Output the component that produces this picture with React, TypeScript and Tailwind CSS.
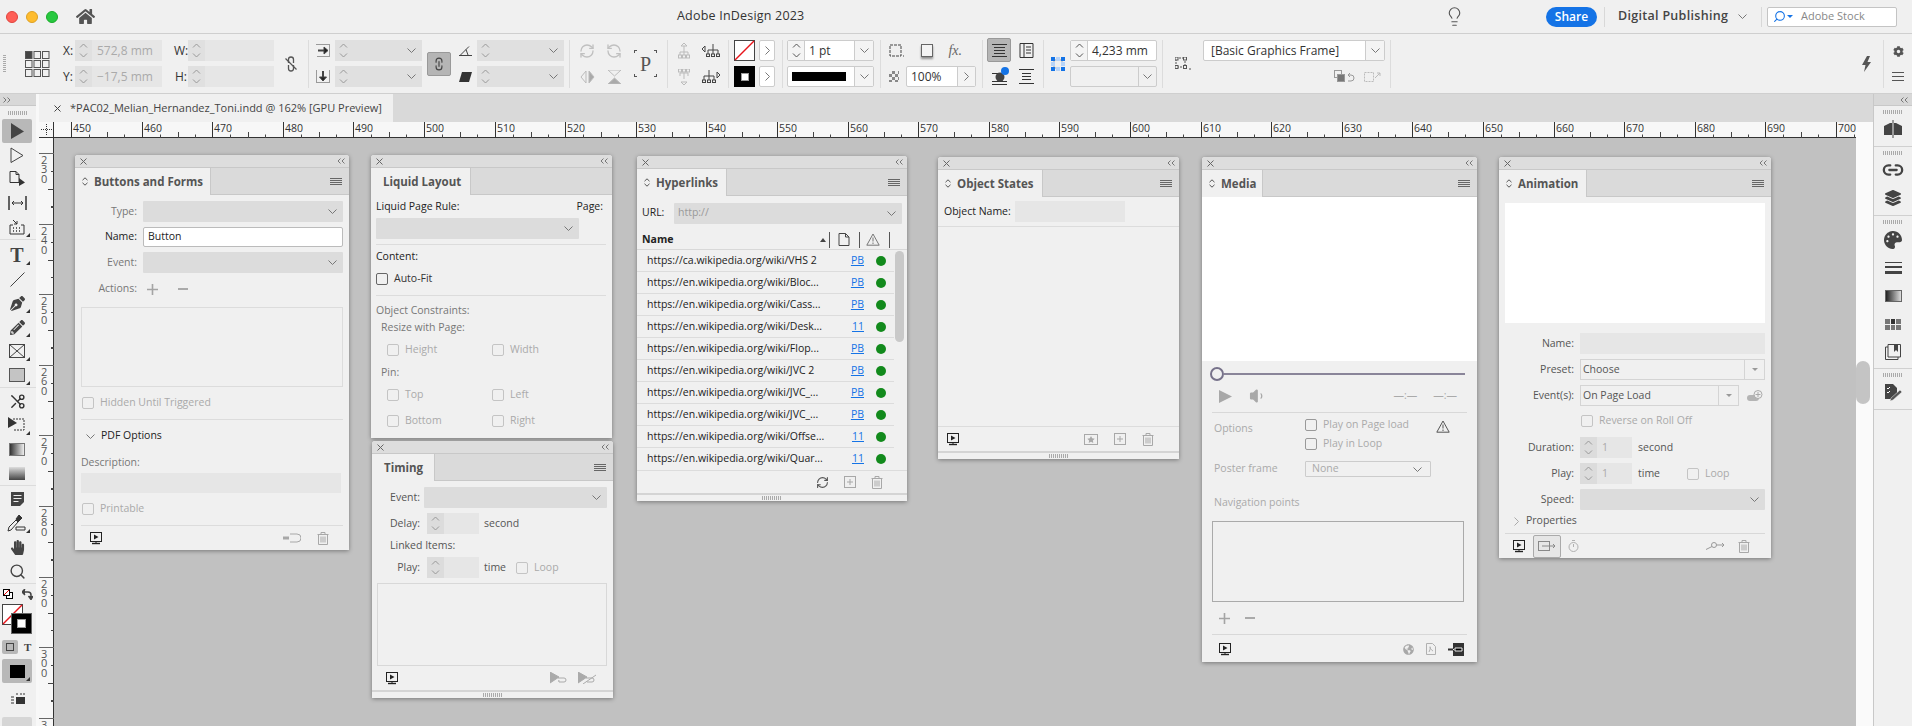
import type { ReactNode } from 'react'
import clsx from 'clsx'
import { FaHome, FaPenNib, FaPencilAlt, FaHandPaper, FaPalette, FaLayerGroup, FaCog, FaGlobeAmericas } from 'react-icons/fa'
import { Search, Scissors, RefreshCw, Lightbulb, Link2, Volume1 } from 'lucide-react'

const HYPERLINKS = [
  ['https://ca.wikipedia.org/wiki/VHS 2', 'PB'],
  ['https://en.wikipedia.org/wiki/Bloc...', 'PB'],
  ['https://en.wikipedia.org/wiki/Cass...', 'PB'],
  ['https://en.wikipedia.org/wiki/Desk...', '11'],
  ['https://en.wikipedia.org/wiki/Flop...', 'PB'],
  ['https://en.wikipedia.org/wiki/JVC 2', 'PB'],
  ['https://en.wikipedia.org/wiki/JVC_...', 'PB'],
  ['https://en.wikipedia.org/wiki/JVC_...', 'PB'],
  ['https://en.wikipedia.org/wiki/Offse...', '11'],
  ['https://en.wikipedia.org/wiki/Quar...', '11'],
]

const RULER_X = Array.from({ length: 26 }, (_, i) => 450 + i * 10)
const RULER_Y = [230, 240, 250, 260, 270, 280, 290, 300, 310]

function Chevron({ className }: { className?: string }) {
  return (
    <svg className={clsx('h-[5px] w-[9px]', className)} viewBox="0 0 9 5" fill="none" stroke="#777" strokeWidth={1}>
      <path d="M0.5 0.5 4.5 4.5 8.5 0.5" />
    </svg>
  )
}

function SpinArrows({ light }: { light?: boolean }) {
  const color = light ? '#999' : '#555'
  return (
    <svg className="h-[15px] w-[9px]" viewBox="0 0 9 15" fill="none" stroke={color} strokeWidth={1}>
      <path d="M1 4.5 4.5 1 8 4.5M1 10.5 4.5 14 8 10.5" />
    </svg>
  )
}

function Collapse({ flip }: { flip?: boolean }) {
  return (
    <svg className={clsx('shrink-0', flip && '-scale-x-100')} width="8" height="6" viewBox="0 0 8 6" fill="none" stroke="#777">
      <path d="M3.500.5 1 3l2.500 2.500M7.500.5 5 3l2.500 2.500" />
    </svg>
  )
}

function Grip() {
  return <div className="h-[4px] w-[20px] bg-[repeating-linear-gradient(90deg,#aaa_0_1px,transparent_1px_2px)]" />
}

function PlusIcon() {
  return (
    <svg width="11" height="11" viewBox="0 0 11 11" stroke="#a4a4a4" strokeWidth="1.600">
      <path d="M5.500 0v11M0 5.500h11" />
    </svg>
  )
}

function SelectBox({ className, children }: { className?: string; children?: ReactNode }) {
  return (
    <div className={clsx('flex h-[21px] items-center justify-between rounded-[1px] bg-[#dcdcdc] pr-[6px] pl-[4px] text-[#999]', className)}>
      <span>{children}</span>
      <Chevron />
    </div>
  )
}

function SpinBox({ value, className }: { value?: string; className?: string }) {
  return (
    <div className={clsx('flex h-[21px] bg-[#e6e6e6] text-[#aaa]', className)}>
      <div className="flex w-[17px] shrink-0 items-center justify-center bg-[#dcdcdc]">
        <SpinArrows light />
      </div>
      <span className="flex items-center pl-[5px]">{value}</span>
    </div>
  )
}

function Check({ label, dark, className }: { label?: string; dark?: boolean; className?: string }) {
  return (
    <div className={clsx('flex h-[16px] items-center gap-[6px]', dark ? 'text-[#333]' : 'text-[#aaa]', className)}>
      <span className={clsx('h-[12px] w-[12px] shrink-0 rounded-[2px] border bg-[#f0f0f0]', dark ? 'border-[#666]' : 'border-[#c4c4c4]')} />
      {label}
    </div>
  )
}

function PreviewIcon() {
  return (
    <svg width="14" height="13" viewBox="0 0 14 13" fill="none">
      <rect x="1.5" y="0.5" width="11" height="9" fill="none" stroke="#222" />
      <path d="M5 2.5 9.5 5 5 7.5Z" fill="#222" />
      <path d="M3 11.5h8" stroke="#222" strokeWidth="1.4" />
      <path d="M6 10h2" stroke="#222" />
    </svg>
  )
}

function TrashIcon() {
  return (
    <svg width="12" height="13" viewBox="0 0 12 13" fill="none" stroke="#a8a8a8">
      <path d="M0.5 2.5h11M4 2.5v-2h4v2M1.5 2.5v10h9v-10M4 4.5v6M6 4.5v6M8 4.5v6" />
    </svg>
  )
}

function PlusBoxIcon() {
  return (
    <svg width="12" height="12" viewBox="0 0 12 12" fill="none" stroke="#a8a8a8">
      <rect x="0.5" y="0.5" width="11" height="11" />
      <path d="M6 3v6M3 6h6" />
    </svg>
  )
}

function WarnIcon({ color }: { color: string }) {
  return (
    <svg width="14" height="13" viewBox="0 0 14 13" fill="none" stroke={color}>
      <path d="M7 1 13.2 12.2H.8Z" />
      <path d="M7 4.5v4M7 9.5v1.5" />
    </svg>
  )
}

function Panel({
  className,
  tabClass,
  title,
  arrows,
  menu = true,
  grip,
  children,
}: {
  className: string
  tabClass: string
  title: string
  arrows?: boolean
  menu?: boolean
  grip?: boolean
  children: ReactNode
}) {
  return (
    <div className={clsx('absolute flex flex-col rounded-t-[3px] bg-[#f0f0f0] text-[10.5px] text-[#555] shadow-[0_1px_4px_rgba(0,0,0,0.38)]', className)}>
      <div className="flex h-[13px] shrink-0 items-center justify-between rounded-t-[3px] border-b border-[#c8c8c8] bg-[#dddddd] pr-[4px] pl-[5px]">
        <svg width="7" height="7" viewBox="0 0 7 7" stroke="#666" strokeWidth="1">
          <path d="M.5.5l6 6M6.5.5l-6 6" />
        </svg>
        <Collapse />
      </div>
      <div className="flex h-[27px] shrink-0 items-stretch border-b border-[#c8c8c8] bg-[#dadada]">
        <div className={clsx('-mb-px flex items-center gap-[6px] border-r border-[#c8c8c8] bg-[#f0f0f0] text-[11.500px] font-bold text-[#555]', arrows ? 'pl-[7px]' : 'pl-[12px]', tabClass)}>
          {arrows && (
            <svg width="6" height="9" viewBox="0 0 6 9" fill="none" stroke="#555">
              <path d="M.5 3.2 3 .8l2.500 2.400M.5 5.800 3 8.200l2.500-2.400" />
            </svg>
          )}
          {title}
        </div>
        <div className="flex-1" />
        {menu && (
          <div className="flex w-[19px] flex-col justify-center gap-[1px] pr-[7px]">
            <i className="h-px bg-[#666]" />
            <i className="h-px bg-[#666]" />
            <i className="h-px bg-[#666]" />
            <i className="h-px bg-[#666]" />
          </div>
        )}
      </div>
      {children}
      {grip && (
        <div className="flex h-[8px] shrink-0 items-center justify-center border-t-[2px] border-[#d4d4d4]">
          <Grip />
        </div>
      )}
    </div>
  )
}

function ButtonsAndForms() {
  return (
    <Panel className="left-[21px] top-[17px] h-[395px] w-[274px]" tabClass="w-[136px]" title="Buttons and Forms" arrows>
      <div className="flex flex-1 flex-col px-[6px] pt-[6px]">
        <div className="flex items-center gap-[6px]">
          <span className="w-[56px] text-right text-[#777]">Type:</span>
          <SelectBox className="w-[200px]" />
        </div>
        <div className="mt-[5px] flex items-center gap-[6px]">
          <span className="w-[56px] text-right text-[#222]">Name:</span>
          <div className="flex h-[20px] w-[200px] items-center rounded-[2px] border border-[#bbb] bg-white pl-[4px] text-[#222]">Button</div>
        </div>
        <div className="mt-[5px] flex items-center gap-[6px]">
          <span className="w-[56px] text-right text-[#777]">Event:</span>
          <SelectBox className="w-[200px]" />
        </div>
        <div className="mt-[6px] flex h-[20px] items-center gap-[6px]">
          <span className="w-[56px] text-right text-[#777]">Actions:</span>
          <span className="ml-[4px] flex"><PlusIcon /></span>
          <span className="ml-[14px] h-[2px] w-[10px] bg-[#aaa]" />
        </div>
        <div className="mt-[8px] h-[80px] w-[262px] border border-[#dcdcdc]" />
        <Check label="Hidden Until Triggered" className="mt-[8px] ml-px" />
        <div className="mt-[8px] border-t border-[#dcdcdc]" />
        <div className="mt-[8px] flex h-[16px] items-center gap-[6px] pl-[5px] text-[#222]">
          <Chevron />
          PDF Options
        </div>
        <div className="mt-[11px] text-[#777]">Description:</div>
        <div className="mt-[2px] h-[20px] w-[260px] bg-[#e6e6e6]" />
        <Check label="Printable" className="mt-[8px] ml-px" />
        <div className="mt-auto flex h-[25px] items-center justify-between border-t border-[#dcdcdc] pr-[14px] pl-[8px]">
          <PreviewIcon />
          <div className="flex items-center gap-[16px]">
            <svg width="18" height="10" viewBox="0 0 18 10" fill="none" stroke="#a8a8a8">
              <path d="M7 1h7a4 4 0 0 1 0 8H7" />
              <path d="M0 5h6" strokeWidth="3" />
            </svg>
            <TrashIcon />
          </div>
        </div>
      </div>
    </Panel>
  )
}

function LiquidLayout() {
  return (
    <Panel className="left-[317px] top-[17px] h-[283px] w-[241px]" tabClass="w-[100px]" title="Liquid Layout" menu={false}>
      <div className="flex flex-1 flex-col px-[5px] pt-[4px] text-[#222]">
        <div className="flex h-[16px] w-[227px] items-center justify-between">
          <span>Liquid Page Rule:</span>
          <span>Page:</span>
        </div>
        <SelectBox className="mt-[3px] w-[203px]" />
        <div className="mt-[5px] w-[230px] border-t border-[#dcdcdc]" />
        <div className="mt-[4px] flex h-[16px] items-center">Content:</div>
        <Check label="Auto-Fit" dark className="mt-[6px]" />
        <div className="mt-[8px] w-[230px] border-t border-[#dcdcdc]" />
        <div className="mt-[7px] flex h-[16px] items-center text-[#777]">Object Constraints:</div>
        <div className="mt-[1px] flex h-[16px] items-center pl-[5px] text-[#777]">Resize with Page:</div>
        <div className="mt-[6px] flex pl-[11px]">
          <Check label="Height" className="w-[105px]" />
          <Check label="Width" />
        </div>
        <div className="mt-[7px] flex h-[16px] items-center pl-[5px] text-[#777]">Pin:</div>
        <div className="mt-[6px] flex pl-[11px]">
          <Check label="Top" className="w-[105px]" />
          <Check label="Left" />
        </div>
        <div className="mt-[10px] flex pl-[11px]">
          <Check label="Bottom" className="w-[105px]" />
          <Check label="Right" />
        </div>
      </div>
    </Panel>
  )
}

function Timing() {
  return (
    <Panel className="left-[318px] top-[303px] h-[257px] w-[241px]" tabClass="w-[63px]" title="Timing" grip>
      <div className="flex flex-1 flex-col px-[5px] pt-[6px]">
        <div className="flex items-center gap-[4px]">
          <span className="w-[43px] text-right">Event:</span>
          <SelectBox className="w-[183px]" />
        </div>
        <div className="mt-[5px] flex items-center">
          <span className="w-[43px] text-right">Delay:</span>
          <SpinBox className="ml-[7px] w-[52px]" />
          <span className="ml-[5px]">second</span>
        </div>
        <div className="mt-[4px] flex h-[16px] items-center pl-[13px]">Linked Items:</div>
        <div className="mt-[3px] flex items-center">
          <span className="w-[43px] text-right">Play:</span>
          <SpinBox className="ml-[7px] w-[52px]" />
          <span className="ml-[5px]">time</span>
          <Check label="Loop" className="ml-[10px]" />
        </div>
        <div className="mt-[5px] h-[83px] w-[230px] border border-[#d8d8d8]" />
        <div className="flex flex-1 items-center justify-between pr-[11px] pl-[8px]">
          <PreviewIcon />
          <div className="flex gap-[9px]">
            <svg width="19" height="12" viewBox="0 0 19 12" fill="none" stroke="#aaa">
              <path d="M0 0 9 5 0 11Z" fill="#aaa" />
              <path d="M8 6h6a2 2 0 0 1 0 4H9a2 2 0 0 1 0-2" />
            </svg>
            <svg width="19" height="12" viewBox="0 0 19 12" fill="none" stroke="#aaa">
              <path d="M0 0 9 5 0 11Z" fill="#aaa" />
              <path d="M8 6h6a2 2 0 0 1 0 4H9M5 12 18 3" />
            </svg>
          </div>
        </div>
      </div>
    </Panel>
  )
}

function Hyperlinks() {
  return (
    <Panel className="left-[583px] top-[18px] h-[345px] w-[270px]" tabClass="w-[90px]" title="Hyperlinks" arrows grip>
      <div className="flex h-[34px] shrink-0 items-center gap-[10px] px-[5px]">
        <span className="w-[22px] text-[#222]">URL:</span>
        <SelectBox className="w-[228px] text-[#999]">http://</SelectBox>
      </div>
      <div className="flex h-[20px] shrink-0 items-center border-b border-[#d8d8d8] pl-[5px] text-[#222]">
        <span className="w-[178px] font-bold">Name</span>
        <span className="h-0 w-0 border-x-[3px] border-b-[4px] border-x-transparent border-b-[#444]" />
        <span className="ml-[3px] h-[16px] w-px bg-[#555]" />
        <svg className="ml-[8px]" width="12" height="13" viewBox="0 0 12 13" fill="none" stroke="#444">
          <path d="M1 .5h6.500L11 4v8.500H1ZM7.500 .5V4H11" />
        </svg>
        <span className="ml-[9px] h-[16px] w-px bg-[#555]" />
        <span className="ml-[6px]"><WarnIcon color="#777" /></span>
        <span className="ml-[9px] h-[16px] w-px bg-[#555]" />
      </div>
      <div className="flex h-[220px] shrink-0">
        <div className="w-[257px]">
          {HYPERLINKS.map(([url, page], i) => (
            <div key={i} className="flex h-[22px] items-center border-b border-[#dcdcdc] pl-[10px] text-[#222] last:border-b-0">
              <span className="w-[180px]">{url}</span>
              <span className="w-[37px] text-right text-[#1473e6] underline">{page}</span>
              <span className="ml-[12px] h-[10px] w-[10px] rounded-full bg-[#128a1c]" />
            </div>
          ))}
        </div>
        <div className="ml-[1px] pt-[1px]">
          <div className="h-[91px] w-[9px] rounded-full bg-[#c9c9c9]" />
        </div>
      </div>
      <div className="flex flex-1 items-center justify-end gap-[15px] border-t border-[#dcdcdc] pr-[24px]">
        <RefreshCw size={13} color="#555" strokeWidth={2} />
        <PlusBoxIcon />
        <TrashIcon />
      </div>
    </Panel>
  )
}

function ObjectStates() {
  return (
    <Panel className="left-[884px] top-[19px] h-[302px] w-[241px]" tabClass="w-[105px]" title="Object States" arrows grip>
      <div className="flex h-[30px] shrink-0 items-center gap-[4px] border-b border-[#dcdcdc] pl-[6px] text-[#222]">
        <span className="w-[67px]">Object Name:</span>
        <span className="h-[21px] w-[110px] bg-[#e6e6e6]" />
      </div>
      <div className="flex-1" />
      <div className="flex h-[25px] shrink-0 items-center justify-between border-t border-[#dcdcdc] pr-[25px] pl-[8px]">
        <PreviewIcon />
        <div className="flex items-center gap-[16px]">
          <svg width="14" height="11" viewBox="0 0 14 11" fill="none" stroke="#a8a8a8">
            <rect x="0.500" y="0.500" width="13" height="10" />
            <path d="M7 2l1.200 2.300 2.500.4-1.800 1.800.4 2.500L7 7.800 4.700 9l.4-2.500-1.800-1.800 2.500-.4Z" fill="#a8a8a8" stroke="none" />
          </svg>
          <PlusBoxIcon />
          <TrashIcon />
        </div>
      </div>
    </Panel>
  )
}

function Media() {
  return (
    <Panel className="left-[1148px] top-[19px] h-[505px] w-[275px]" tabClass="w-[61px]" title="Media" arrows>
      <div className="h-[164px] shrink-0 bg-white" />
      <div className="flex h-[26px] shrink-0 items-center pl-[8px]">
        <span className="h-[14px] w-[14px] shrink-0 rounded-full border-[2px] border-[#77728a] bg-[#f0f0f0]" />
        <span className="h-[2px] w-[241px] bg-[#8a8599]" />
      </div>
      <div className="flex h-[25px] shrink-0 items-center pr-[20px] pb-[7px] pl-[17px] text-[#aaa]">
        <svg width="13" height="13" viewBox="0 0 13 13">
          <path d="M0 0 13 6.500 0 13Z" fill="#a8a8a8" />
        </svg>
        <Volume1 className="ml-[17px]" size={18} color="#a8a8a8" fill="#a8a8a8" strokeWidth={1.5} />
        <span className="ml-auto">—:—</span>
        <span className="ml-[16px]">—:—</span>
      </div>
      <div className="mx-[10px] flex-1 border-t border-[#d8d8d8] text-[#aaa]">
        <div className="mt-[4px] flex">
          <span className="ml-[2px] flex h-[20px] w-[91px] items-end">Options</span>
          <div className="flex flex-col gap-[3px]">
            <Check label="Play on Page load" className="[&>span]:border-[#999]" />
            <Check label="Play in Loop" className="[&>span]:border-[#999]" />
          </div>
          <span className="ml-[27px] pt-[3px]"><WarnIcon color="#555" /></span>
        </div>
        <div className="mt-[9px] flex items-center">
          <span className="ml-[2px] w-[91px]">Poster frame</span>
          <div className="flex h-[16px] w-[126px] items-center justify-between rounded-[1px] border border-[#ccc] pr-[8px] pl-[6px]">
            None
            <Chevron />
          </div>
        </div>
        <div className="mt-[18px] ml-[2px] flex h-[16px] items-center">Navigation points</div>
        <div className="mt-[10px] h-[81px] w-[252px] border border-[#aaa]" />
        <div className="flex h-[32px] items-center gap-[15px] pl-[7px]">
          <PlusIcon />
          <span className="h-[2px] w-[10px] bg-[#aaa]" />
        </div>
      </div>
      <div className="mx-[10px] flex h-[29px] shrink-0 items-center justify-between border-t border-[#d8d8d8] pl-[6px] pr-[3px]">
        <PreviewIcon />
        <div className="flex items-center gap-[12px]">
          <FaGlobeAmericas size={11} color="#a8a8a8" />
          <svg width="10" height="12" viewBox="0 0 10 12" fill="none" stroke="#b0b0b0">
            <path d="M.5.5h6l3 3v8h-9Z" />
            <path d="M3 9c2-4 1-6 1-5s1 3 3 4" />
          </svg>
          <svg width="16" height="13" viewBox="0 0 16 13">
            <path d="M5 0h11v13H5Z" fill="#333" />
            <path d="M7 5h7v3H7ZM0 6.500h6" stroke="#f0f0f0" />
            <path d="M0 5.500h5v2H0Z" fill="#333" />
          </svg>
        </div>
      </div>
    </Panel>
  )
}

function Animation() {
  return (
    <Panel className="left-[1445px] top-[19px] h-[401px] w-[272px]" tabClass="w-[88px]" title="Animation" arrows>
      <div className="flex flex-1 flex-col px-[6px] pt-[6px]">
        <div className="h-[120px] w-[260px] bg-white" />
        <div className="mt-[10px] flex items-center gap-[6px]">
          <span className="w-[69px] text-right">Name:</span>
          <div className="h-[21px] w-[185px] bg-[#e6e6e6]" />
        </div>
        <div className="mt-[5px] flex items-center gap-[6px]">
          <span className="w-[69px] text-right">Preset:</span>
          <div className="flex h-[21px] w-[185px] items-center border border-[#d4d4d4] pl-[2px]">
            <span className="flex-1">Choose</span>
            <span className="flex h-full w-[20px] items-center justify-center border-l border-[#d4d4d4]">
              <span className="border-x-[3px] border-t-[3px] border-x-transparent border-t-[#999]" />
            </span>
          </div>
        </div>
        <div className="mt-[5px] flex items-center gap-[6px]">
          <span className="w-[69px] text-right">Event(s):</span>
          <div className="flex h-[21px] w-[159px] items-center border border-[#d4d4d4] pl-[2px]">
            <span className="flex-1">On Page Load</span>
            <span className="flex h-full w-[20px] items-center justify-center border-l border-[#d4d4d4]">
              <span className="border-x-[3px] border-t-[3px] border-x-transparent border-t-[#999]" />
            </span>
          </div>
          <svg className="ml-[2px]" width="16" height="12" viewBox="0 0 16 12" fill="none">
            <rect x="0" y="5" width="12" height="6" rx="3" fill="#b4b4b4" />
            <circle cx="11" cy="4.500" r="4" fill="#f0f0f0" stroke="#aaa" />
            <path d="M11 2v5M8.500 4.500h5" stroke="#aaa" />
          </svg>
        </div>
        <Check label="Reverse on Roll Off" className="mt-[7px] ml-[76px]" />
        <div className="mt-[8px] flex items-center gap-[6px]">
          <span className="w-[69px] text-right">Duration:</span>
          <SpinBox value="1" className="w-[52px]" />
          <span>second</span>
        </div>
        <div className="mt-[5px] flex items-center gap-[6px]">
          <span className="w-[69px] text-right">Play:</span>
          <SpinBox value="1" className="w-[52px]" />
          <span className="w-[43px]">time</span>
          <Check label="Loop" />
        </div>
        <div className="mt-[5px] flex items-center gap-[6px]">
          <span className="w-[69px] text-right">Speed:</span>
          <SelectBox className="w-[185px]" />
        </div>
        <div className="mt-[3px] flex h-[16px] items-center pl-[9px]">
          <svg width="5" height="9" viewBox="0 0 5 9" fill="none" stroke="#aaa">
            <path d="M.5.5l4 4-4 4" />
          </svg>
          <span className="ml-[7px]">Properties</span>
        </div>
        <div className="mt-auto flex h-[25px] items-center border-t border-[#d8d8d8] pl-[7px]">
          <PreviewIcon />
          <span className="ml-[7px] flex h-[23px] w-[28px] items-center justify-center rounded-[2px] border border-[#aaa] bg-[#e6e6e6]">
            <svg width="18" height="10" viewBox="0 0 18 10" fill="none" stroke="#888">
              <rect x="0.500" y="0.500" width="11" height="9" />
              <path d="M4 5h13M15 3l2 2-2 2" />
            </svg>
          </span>
          <svg className="ml-[7px]" width="11" height="12" viewBox="0 0 11 12" fill="none" stroke="#b0b0b0">
            <circle cx="5.500" cy="7" r="4.500" />
            <path d="M4 .5h3M5.500 7V4" />
          </svg>
          <svg className="ml-auto" width="20" height="8" viewBox="0 0 20 8" fill="none" stroke="#999">
            <circle cx="9" cy="3" r="2.500" />
            <path d="M11.500 3H19M17 1l2 2-2 2M7 4.500 1 7.500" />
          </svg>
          <span className="mr-[15px] ml-[13px]"><TrashIcon /></span>
        </div>
      </div>
    </Panel>
  )
}

function TopRuler() {
  return (
    <svg className="h-[16px] w-[1802px] shrink-0" viewBox="0 0 1802 16">
      <rect width="1802" height="16" fill="#f7f7f7" />
      <path d="M0 15.500H1802" stroke="#333" />
      {RULER_X.map((v) => {
        const x = Math.round(17 + (v - 450) * 7.06) + 0.5
        return (
          <g key={v}>
            <path d={`M${x} 0V16`} stroke="#333" />
            {[1, 2, 3].map((k) => (
              <path key={k} d={`M${Math.round(x + k * 17.65) + 0.5} ${k === 2 ? 10 : 12.5}V16`} stroke="#444" />
            ))}
            <text x={x + 1.500} y={10} fontSize="10.500" fill="#333" fontFamily="Open Sans">{v}</text>
          </g>
        )
      })}
    </svg>
  )
}

function SideRuler() {
  return (
    <svg className="h-[588px] w-[15px] shrink-0" viewBox="0 0 15 588">
      <rect width="15" height="588" fill="#f7f7f7" />
      <path d="M14.500 0V588" stroke="#333" />
      {RULER_Y.map((v) => {
        const y = Math.round(15 + (v - 230) * 7.06) + 0.5
        return (
          <g key={v}>
            <path d={`M0 ${y}H15`} stroke="#666" />
            {[-1, 1, 2, 3].map((k) => (
              <path key={k} d={`M${k === 2 ? 9 : 12} ${Math.round(y + k * 17.65) + 0.5}H15`} stroke="#444" />
            ))}
            {String(v).split('').map((d, i) => (
              <text key={i} x={2} y={y + 10 + i * 9.500} fontSize="11" fill="#555" fontFamily="Open Sans">{d}</text>
            ))}
          </g>
        )
      })}
    </svg>
  )
}

function Tool({ children, active, corner }: { children: ReactNode; active?: boolean; corner?: boolean }) {
  return (
    <div className={clsx('relative mx-[2px] flex h-[24px] w-[30px] items-center justify-center rounded-[2px]', active && 'bg-[#b8b8b8]')}>
      {children}
      {corner && <span className="absolute right-[2px] bottom-[2px] h-0 w-0 border-b-[4px] border-l-[4px] border-b-[#333] border-l-transparent" />}
    </div>
  )
}

function Toolbar() {
  return (
    <div className="flex w-[39px] shrink-0 flex-col border-r-[3px] border-[#f8f8f8] bg-[#f0f0f0]">
      <div className="flex h-[12px] shrink-0 items-center border-b border-[#c8c8c8] bg-[#d8d8d8] pl-[3px]">
        <Collapse flip />
      </div>
      <div className="flex h-[13px] shrink-0 items-center justify-center">
        <Grip />
      </div>
      <div className="border-b border-[#dcdcdc]">
        <Tool active>
          <svg width="14" height="17" viewBox="0 0 14 17"><path d="M1 0 14 8.500 1 16Z" fill="#444" /></svg>
        </Tool>
        <Tool>
          <svg width="14" height="17" viewBox="0 0 14 17" fill="none" stroke="#444"><path d="M1 1 13 8.500 1 15.500Z" /></svg>
        </Tool>
        <Tool>
          <svg width="17" height="16" viewBox="0 0 17 16" fill="none" stroke="#333"><path d="M1 .5h6l3 3v8H1ZM7 .5v3h3" /><path d="M10 7 16 11.500 10 15Z" fill="#333" stroke="none" /></svg>
        </Tool>
        <Tool>
          <svg width="19" height="14" viewBox="0 0 19 14" fill="none" stroke="#333"><path d="M1 0v14M18 0v14" strokeWidth="1.500" /><path d="M4 7h11M6 5 4 7l2 2M13 5l2 2-2 2" /></svg>
        </Tool>
        <Tool corner>
          <svg width="16" height="16" viewBox="0 0 16 16" fill="none" stroke="#333"><path d="M4 1l4 4M8 2v3H5" /><path d="M1 6h3M12 6h3M1 6v9h14V6" /><path d="M4 9h1M7 9h1M10 9h1M4 12h1M7 12h1M10 12h1" strokeWidth="1.500" /></svg>
        </Tool>
      </div>
      <div className="border-b border-[#dcdcdc] pt-[3px]">
        <Tool corner><span className="font-['Liberation_Serif',serif] text-[20px] leading-none font-bold text-[#444]">T</span></Tool>
        <Tool><svg width="15" height="15" viewBox="0 0 15 15" stroke="#444"><path d="M.5 14.500 14.500.5" /></svg></Tool>
        <Tool corner><FaPenNib size={15} color="#444" /></Tool>
        <Tool corner><FaPencilAlt size={15} color="#444" /></Tool>
        <Tool corner><svg width="16" height="14" viewBox="0 0 16 14" fill="none" stroke="#444"><rect x="0.500" y="0.500" width="15" height="13" /><path d="M.5.5l15 13M15.500.5l-15 13" /></svg></Tool>
        <Tool corner><span className="h-[14px] w-[16px] border border-[#555] bg-[#c4c4c4]" /></Tool>
      </div>
      <div className="border-b border-[#dcdcdc] pt-px">
        <Tool><Scissors size={17} color="#333" className="-scale-x-100" /></Tool>
        <Tool corner>
          <svg width="18" height="16" viewBox="0 0 18 16" fill="none" stroke="#333"><path d="M5 2h11v11H5" strokeDasharray="2 1" /><path d="M0 0 9 6 0 11Z" fill="#333" stroke="none" /></svg>
        </Tool>
        <Tool><span className="h-[13px] w-[16px] border border-[#777] bg-[linear-gradient(90deg,#333,#eee)]" /></Tool>
        <Tool><span className="h-[13px] w-[16px] bg-[linear-gradient(180deg,#ddd,#444)]" /></Tool>
      </div>
      <div className="border-b border-[#dcdcdc] pt-px">
        <Tool>
          <svg width="15" height="15" viewBox="0 0 15 15"><path d="M1 0h13v10l-4 4H1Z" fill="#444" /><path d="M3.500 3.500h8M3.500 6.500h8M3.500 9.500h5" stroke="#eee" /></svg>
        </Tool>
        <Tool corner>
          <svg width="20" height="18" viewBox="0 0 20 18" fill="none" stroke="#333"><path d="M1 17l3-1 7-8-2-2-7 7Z" /><path d="M9 5l3-4 3 3-4 4Z" fill="#333" /><path d="M9 13h9v3H9Z" fill="#f0f0f0" /></svg>
        </Tool>
        <Tool><FaHandPaper size={15} color="#444" /></Tool>
        <Tool><Search size={17} color="#444" /></Tool>
      </div>
      <div className="relative flex-1">
        <div className="flex h-[20px] items-center justify-between px-[3px]">
          <svg width="10" height="10" viewBox="0 0 10 10"><rect x="3.500" y="3.500" width="6" height="6" fill="#fff" stroke="#000" /><rect x=".5" y=".5" width="6" height="6" fill="#fff" stroke="#000" /><path d="M1 6 6 1" stroke="#e00" /></svg>
          <svg width="11" height="11" viewBox="0 0 11 11" fill="none" stroke="#444" strokeWidth="1.500"><path d="M1 3h5a3 3 0 0 1 3 3v4" /><path d="M3 0 0 3l3 3" fill="#444" /><path d="M6.500 7 9 10.500 11 7" fill="#444" /></svg>
        </div>
        <div className="relative ml-[2px] h-[31px] w-[30px]">
          <svg className="absolute top-0 left-0" width="21" height="21" viewBox="0 0 21 21"><rect x=".5" y=".5" width="20" height="20" fill="#fff" stroke="#444" /><path d="M1 20 20 1" stroke="#e8141b" strokeWidth="1.500" /></svg>
          <div className="absolute top-[9px] left-[9px] flex h-[21px] w-[21px] items-center justify-center border border-[#666] bg-black">
            <span className="h-[9px] w-[9px] border border-[#999] bg-white" />
          </div>
        </div>
        <div className="mt-[5px] flex h-[14px] items-center">
          <span className="ml-[2px] flex h-[14px] w-[16px] items-center justify-center rounded-[2px] bg-[#b8b8b8]">
            <span className="h-[8px] w-[8px] border border-[#444]" />
          </span>
          <span className="ml-[6px] font-['Liberation_Serif',serif] text-[11px] font-bold text-[#444]">T</span>
        </div>
        <div className="relative mx-[2px] mt-[5px] flex h-[24px] w-[30px] items-center justify-center rounded-[2px] bg-[#b8b8b8]">
          <span className="h-[13px] w-[15px] bg-black" />
          <span className="absolute right-[2px] bottom-[2px] border-b-[4px] border-l-[4px] border-b-[#333] border-l-transparent" />
        </div>
        <div className="mt-[10px] flex h-[14px] justify-center">
          <svg width="15" height="11" viewBox="0 0 15 11"><rect x="5" y="4" width="9" height="7" fill="#333" /><path d="M0 4h3M0 7h3M0 10h3M5 1h2M9 1h2M12 1h2" stroke="#333" /></svg>
        </div>
        <div className="mx-[2px] mt-[10px] h-[20px] w-[30px] rounded-[2px] bg-[#d6d6d6]" />
      </div>
    </div>
  )
}

function DockGroup({ children, className }: { children: ReactNode; className: string }) {
  return (
    <div className={clsx('flex flex-col items-center border-b border-[#d0d0d0] pt-[4px]', className)}>
      <Grip />
      {children}
    </div>
  )
}

function DockIcon({ children }: { children: ReactNode }) {
  return <div className="flex h-[28px] w-full items-center justify-center">{children}</div>
}

function RightDock() {
  return (
    <div className="flex w-[39px] shrink-0 flex-col border-l border-[#c8c8c8] bg-[#f0f0f0]">
      <div className="flex h-[12px] shrink-0 items-center justify-end border-b border-[#c8c8c8] bg-[#d8d8d8] pr-[4px]">
        <Collapse />
      </div>
      <DockGroup className="h-[41px]">
        <div className="mt-[6px] flex h-[18px] items-center">
          <svg width="18" height="18" viewBox="0 0 18 18"><path d="M0 6 6 3h2v12H0ZM18 6l-6-3h-2v12h8Z" fill="#444" /><path d="M9 0v18" stroke="#444" /></svg>
        </div>
      </DockGroup>
      <DockGroup className="h-[69px]">
        <div className="mt-[1px] w-full">
          <DockIcon><Link2 size={22} color="#444" strokeWidth={2.500} /></DockIcon>
          <DockIcon><FaLayerGroup size={16} color="#444" /></DockIcon>
        </div>
      </DockGroup>
      <DockGroup className="h-[153px]">
        <div className="mt-[2px] w-full">
          <DockIcon><FaPalette size={18} color="#444" /></DockIcon>
          <DockIcon>
            <div className="flex w-[17px] flex-col gap-[3px]">
              <i className="h-px bg-[#444]" />
              <i className="h-[2px] bg-[#444]" />
              <i className="h-[3px] bg-[#444]" />
            </div>
          </DockIcon>
          <DockIcon><span className="h-[12px] w-[17px] border border-[#666] bg-[linear-gradient(90deg,#222,#ddd)]" /></DockIcon>
          <DockIcon>
            <div className="grid h-[11px] w-[16px] grid-cols-3 gap-px bg-[#f0f0f0]">
              <i className="bg-[#777]" /><i className="bg-[#333]" /><i className="bg-[#777]" />
              <i className="bg-[#777]" /><i className="bg-[#777]" /><i className="bg-[#777]" />
            </div>
          </DockIcon>
          <DockIcon>
            <svg width="16" height="16" viewBox="0 0 16 16" fill="none" stroke="#444"><path d="M3 .5h12.500v12.500H3Z" /><path d="M.5 3H3M.5 3v12.500H13V13" /><path d="M9 1h4v7l-2-2-2 2Z" fill="#444" stroke="none" /></svg>
          </DockIcon>
        </div>
      </DockGroup>
      <DockGroup className="h-[41px]">
        <div className="mt-[7px]">
          <svg width="18" height="17" viewBox="0 0 18 17"><path d="M1 0h8l4 4v5l-6 6H1Z" fill="#444" /><path d="M3 4l1 1 2-2M3 8l1 1 2-2" stroke="#fff" fill="none" /><path d="M7 14l9-8 2 2-9 8-3 1Z" fill="#555" stroke="#f0f0f0" strokeWidth=".5" /></svg>
        </div>
      </DockGroup>
    </div>
  )
}

function TitleBar() {
  return (
    <div className="flex h-[34px] shrink-0 items-center border-b border-[#cfcfcf] bg-[#f0f0f0]">
      <span className="ml-[6px] h-[12px] w-[12px] rounded-full border border-[#e0443e] bg-[#ff5f57]" />
      <span className="ml-[8px] h-[12px] w-[12px] rounded-full border border-[#dea123] bg-[#febc2e]" />
      <span className="ml-[8px] h-[12px] w-[12px] rounded-full border border-[#1aab29] bg-[#28c840]" />
      <FaHome className="ml-[18px]" size={19} color="#555" />
      <span className="ml-[582px] text-[12.500px] tracking-[0.2px] text-[#333]">Adobe InDesign 2023</span>
      <div className="mr-[15px] ml-auto flex items-center">
        <Lightbulb size={21} color="#555" strokeWidth={1.300} />
        <button className="ml-[81px] flex h-[20px] w-[51px] items-center justify-center rounded-full bg-[#1473e6] text-[12px] font-semibold text-white">Share</button>
        <span className="ml-[7px] h-[20px] w-px bg-[#d8d8d8]" />
        <span className="ml-[13px] w-[110px] text-[12.500px] font-semibold tracking-[0.3px] text-[#444]">Digital Publishing</span>
        <Chevron className="ml-[10px]" />
        <span className="ml-[14px] h-[20px] w-px bg-[#d8d8d8]" />
        <div className="ml-[5px] flex h-[20px] w-[130px] items-center rounded-[2px] border border-[#c4c4c4] bg-white pl-[5px] text-[11px] text-[#888]">
          <Search size={13} color="#1473e6" className="-scale-x-100" />
          <span className="mr-[8px] ml-px h-0 w-0 border-x-[3px] border-t-[3px] border-x-transparent border-t-[#1473e6]" />
          Adobe Stock
        </div>
      </div>
    </div>
  )
}

function BarSep({ className }: { className: string }) {
  return <span className={clsx('h-[48px] w-px shrink-0 bg-[#dcdcdc]', className)} />
}

function Stack({ children, className }: { children: ReactNode; className: string }) {
  return <div className={clsx('flex shrink-0 flex-col gap-[5px]', className)}>{children}</div>
}

function Slot({ children }: { children?: ReactNode }) {
  return <div className="flex h-[21px] items-center justify-center">{children}</div>
}

function MiniSpin({ value, className }: { value?: string; className: string }) {
  return (
    <div className={clsx('flex h-[21px] items-center bg-[#e6e6e6] text-[#aaa]', className)}>
      <div className="flex h-full w-[17px] shrink-0 items-center justify-center bg-[#e0e0e0]"><SpinArrows light /></div>
      <span className="pl-[5px]">{value}</span>
    </div>
  )
}

function DimSelect() {
  return (
    <div className="flex h-[21px] w-[87px] items-center justify-between bg-[#e0e0e0] pr-[6px]">
      <div className="flex w-[17px] justify-center"><SpinArrows light /></div>
      <Chevron />
    </div>
  )
}

function ControlBar() {
  return (
    <div className="flex h-[60px] shrink-0 items-center border-b border-[#cfcfcf] bg-[#f0f0f0] text-[12px] text-[#333]">
      <div className="ml-[3px] h-[18px] w-[3px] shrink-0 bg-[repeating-linear-gradient(180deg,#aaa_0_1px,transparent_1px_2px)]" />
      <svg className="ml-[19px] shrink-0" width="25" height="26" viewBox="0 0 25 26" fill="none" stroke="#555">
        {[0, 1, 2].flatMap((r) => [0, 1, 2].map((c) => (
          <rect key={`${r}${c}`} x={0.5 + c * 8.5} y={0.5 + r * 9} width="6.500" height="7" fill={r + c === 0 ? '#444' : 'none'} />
        )))}
      </svg>
      <Stack className="ml-[12px] w-[12px] pl-0 text-[#333]">
        <Slot>X:</Slot>
        <Slot>Y:</Slot>
      </Stack>
      <Stack className="ml-px w-[87px]">
        <MiniSpin value="572,8 mm" className="w-[87px]" />
        <MiniSpin value="−17,5 mm" className="w-[87px]" />
      </Stack>
      <Stack className="ml-[12px] w-[14px]">
        <Slot>W:</Slot>
        <Slot>H:</Slot>
      </Stack>
      <Stack className="w-[86px]">
        <MiniSpin className="w-[86px]" />
        <MiniSpin className="w-[86px]" />
      </Stack>
      <svg className="ml-[11px] shrink-0" width="12" height="16" viewBox="0 0 12 16" fill="none" stroke="#555" strokeWidth="1.300">
        <path d="M3.500 7V3.500a2.500 2.500 0 0 1 5 0V7M3.500 9v3.500a2.500 2.500 0 0 0 5 0V9" />
        <path d="M.5 2.500 11.500 13.500" />
      </svg>
      <BarSep className="ml-[11px]" />
      <Stack className="ml-[7px] w-[14px]">
        <Slot>
          <svg width="14" height="13" viewBox="0 0 14 13" fill="none" stroke="#444"><path d="M.5 .5H13.500V12.500H.5" strokeDasharray="1 1" /><path d="M2 6.500h8" strokeWidth="2" /><path d="M8 3l4 3.500L8 10Z" fill="#222" /></svg>
        </Slot>
        <Slot>
          <svg width="14" height="13" viewBox="0 0 14 13" fill="none" stroke="#444"><path d="M.5 .5V12.500H13.500V.5" strokeDasharray="1 1" /><path d="M7 1v7" strokeWidth="2" /><path d="M3.500 7 7 11l3.500-4Z" fill="#222" /></svg>
        </Slot>
      </Stack>
      <Stack className="ml-[5px] w-[87px]">
        <DimSelect />
        <DimSelect />
      </Stack>
      <div className="ml-[5px] flex h-[24px] w-[24px] shrink-0 items-center justify-center rounded-[2px] border border-[#999] bg-[#b5b5b5]">
        <Link2 size={14} color="#444" className="rotate-90" />
      </div>
      <Stack className="ml-[8px] w-[13px]">
        <Slot><svg width="13" height="10" viewBox="0 0 13 10" fill="none" stroke="#444"><path d="M0 9.500h13M1 9.500 10 .5M7 3.500 9 9" /></svg></Slot>
        <Slot><svg width="13" height="10" viewBox="0 0 13 10"><path d="M3 0h10l-3 10H0Z" fill="#333" /></svg></Slot>
      </Stack>
      <Stack className="ml-[5px] w-[87px]">
        <DimSelect />
        <DimSelect />
      </Stack>
      <BarSep className="ml-[5px]" />
      <Stack className="ml-[9px] w-[16px]">
        <Slot><RefreshCw size={16} color="#c0c0c0" /></Slot>
        <Slot><svg width="15" height="14" viewBox="0 0 15 14" fill="none" stroke="#bbb"><path d="M6 1 1 7l5 6Z" /><path d="M9 1l5 6-5 6Z" fill="#aaa" /></svg></Slot>
      </Stack>
      <Stack className="ml-[11px] w-[16px]">
        <Slot><RefreshCw size={16} color="#c0c0c0" className="-scale-x-100" /></Slot>
        <Slot><svg width="15" height="14" viewBox="0 0 15 14" fill="none" stroke="#bbb"><path d="M1 0h13L7.500 6Z" /><path d="M1 14h13L7.500 8Z" fill="#aaa" /></svg></Slot>
      </Stack>
      <div className="relative ml-[12px] flex h-[27px] w-[23px] shrink-0 items-center justify-center font-['Liberation_Serif',serif] text-[20px] leading-none text-[#555]">
        P
        <span className="absolute top-0 left-0 h-[3px] w-[3px] border-t border-l border-[#555]" />
        <span className="absolute right-0 bottom-0 h-[3px] w-[3px] border-r border-b border-[#555]" />
        <span className="absolute top-0 right-0 h-[3px] w-[3px] border-t border-r border-[#555]" />
        <span className="absolute bottom-0 left-0 h-[3px] w-[3px] border-b border-l border-[#555]" />
      </div>
      <BarSep className="ml-[10px]" />
      <Stack className="ml-[10px] w-[12px]">
        <Slot><svg width="12" height="16" viewBox="0 0 12 16" fill="none" stroke="#bbb"><path d="M6 0 3 3h6ZM6 3v6M2 12V9h8v3M6 9v3" /><rect x="0.500" y="12" width="3" height="3" /><rect x="4.500" y="12" width="3" height="3" /><rect x="8.500" y="12" width="3" height="3" /></svg></Slot>
        <Slot><svg width="12" height="16" viewBox="0 0 12 16" fill="none" stroke="#bbb"><path d="M6 16 3 13h6ZM6 4v6M2 7V4h8v3" /><rect x="0.500" y="0" width="3" height="3" /><rect x="4.500" y="0" width="3" height="3" /><rect x="8.500" y="0" width="3" height="3" /></svg></Slot>
      </Stack>
      <Stack className="ml-[12px] w-[18px]">
        <Slot><svg width="18" height="13" viewBox="0 0 18 13" fill="none" stroke="#444"><path d="M0 5l3-3v6ZM11 0v6M6 10V6h10v4M11 6v4" /><rect x="4.500" y="10" width="3" height="2.500" /><rect x="9.500" y="10" width="3" height="2.500" /><rect x="14.500" y="10" width="3" height="2.500" /></svg></Slot>
        <Slot><svg width="18" height="13" viewBox="0 0 18 13" fill="none" stroke="#444"><path d="M18 5l-3-3v6ZM7 0v6M2 10V6h10v4M7 6v4" /><rect x="0.500" y="10" width="3" height="2.500" /><rect x="5.500" y="10" width="3" height="2.500" /><rect x="10.500" y="10" width="3" height="2.500" /></svg></Slot>
      </Stack>
      <BarSep className="ml-[8px]" />
      <Stack className="ml-[5px] w-[21px]">
        <svg width="21" height="21" viewBox="0 0 21 21"><rect x=".5" y=".5" width="20" height="20" fill="#fff" stroke="#444" /><path d="M1 20 20 1" stroke="#e8141b" strokeWidth="1.500" /></svg>
        <div className="flex h-[21px] items-center justify-center bg-black"><span className="h-[8px] w-[8px] border border-[#999] bg-white" /></div>
      </Stack>
      <Stack className="ml-[4px] w-[16px]">
        <div className="flex h-[21px] items-center justify-center rounded-[2px] border border-[#ccc] bg-white"><svg width="5" height="9" viewBox="0 0 5 9" fill="none" stroke="#777"><path d="M.5.5l4 4-4 4" /></svg></div>
        <div className="flex h-[21px] items-center justify-center rounded-[2px] border border-[#ccc] bg-white"><svg width="5" height="9" viewBox="0 0 5 9" fill="none" stroke="#777"><path d="M.5.5l4 4-4 4" /></svg></div>
      </Stack>
      <BarSep className="ml-[7px]" />
      <Stack className="ml-[4px] w-[87px]">
        <div className="flex h-[21px] items-center rounded-[2px] border border-[#ccc] bg-white">
          <div className="flex h-full w-[17px] items-center justify-center border-r border-[#ccc] bg-[#f4f4f4]"><SpinArrows /></div>
          <span className="flex-1 pl-[4px]">1 pt</span>
          <div className="flex h-full w-[19px] items-center justify-center border-l border-[#ccc] bg-[#f4f4f4]"><Chevron /></div>
        </div>
        <div className="flex h-[21px] items-center rounded-[2px] border border-[#ccc] bg-white pl-[4px]">
          <span className="h-[9px] w-[54px] bg-black" />
          <div className="ml-auto flex h-full w-[19px] items-center justify-center border-l border-[#ccc] bg-[#f4f4f4]"><Chevron /></div>
        </div>
      </Stack>
      <BarSep className="ml-[6px]" />
      <Stack className="ml-[8px] w-[87px]">
        <div className="flex h-[21px] items-center justify-between pr-[14px]">
          <svg width="16" height="14" viewBox="0 0 16 14" fill="none" stroke="#444"><rect x="1" y="1" width="11" height="11" strokeDasharray="3 1" /><path d="M14 12h1" /></svg>
          <span className="h-[13px] w-[12px] border border-[#666] bg-[#f4f4f4] shadow-[0_2px_2px_rgba(0,0,0,0.4)]" />
          <span className="font-['Liberation_Serif',serif] text-[14px] text-[#666] italic">fx.</span>
        </div>
        <div className="flex h-[21px] items-center">
          <span className="h-[11px] w-[10px] bg-[repeating-conic-gradient(#888_0_25%,#eee_0_50%)] bg-[length:6px_6px]" />
          <div className="ml-[7px] flex h-full w-[70px] items-center rounded-[2px] border border-[#ccc] bg-white pl-[4px]">
            100%
            <div className="ml-auto flex h-full w-[18px] items-center justify-center border-l border-[#ccc] bg-[#f4f4f4]"><svg width="5" height="9" viewBox="0 0 5 9" fill="none" stroke="#777"><path d="M.5.5l4 4-4 4" /></svg></div>
          </div>
        </div>
      </Stack>
      <BarSep className="ml-[6px]" />
      <Stack className="ml-[4px] w-[24px]">
        <div className="-mt-[2px] flex h-[24px] items-center justify-center rounded-[2px] border border-[#999] bg-[#b5b5b5]">
          <svg width="15" height="15" viewBox="0 0 15 15" stroke="#333"><path d="M0 1.500h15M2 4.500h11M2 7.500h11M2 10.500h11M0 13.500h15" /></svg>
        </div>
        <div className="relative flex h-[20px] items-center justify-center">
          <svg width="15" height="15" viewBox="0 0 15 15" stroke="#333"><path d="M0 3.500h6M0 11.500h15M0 14.500h15" /><circle cx="8" cy="7" r="4.500" fill="#444" stroke="none" /></svg>
          <span className="absolute top-0 right-[2px] h-[8px] w-[8px] rounded-full bg-[#1473e6]" />
        </div>
      </Stack>
      <Stack className="ml-[8px] w-[15px]">
        <Slot><svg width="15" height="15" viewBox="0 0 15 15" fill="none" stroke="#333"><path d="M1 .5h13M1 14.500h13M1 .5v14M14 .5v14M5 .5v14" /><path d="M7 4h5M7 7h5M7 10h5" /></svg></Slot>
        <Slot><svg width="15" height="15" viewBox="0 0 15 15" stroke="#333"><path d="M0 .5h15M3 4.500h9M3 7.500h9M3 10.500h9M0 14.500h15" /></svg></Slot>
      </Stack>
      <BarSep className="ml-[9px]" />
      <svg className="ml-[7px] shrink-0" width="14" height="14" viewBox="0 0 14 14" fill="none">
        <rect x="3" y="3" width="8" height="8" stroke="#aaa" strokeDasharray="2 1" />
        {[0, 5, 10].flatMap((x) => [0, 5, 10].filter((y) => x !== 5 || y !== 5).map((y) => (
          <rect key={`${x}${y}`} x={x} y={y} width="4" height="4" fill={x === 5 || y === 5 ? '#b8d4f8' : '#1473e6'} />
        )))}
      </svg>
      <Stack className="ml-[5px] w-[87px]">
        <div className="flex h-[21px] items-center rounded-[2px] border border-[#ccc] bg-white">
          <div className="flex h-full w-[17px] items-center justify-center border-r border-[#ccc] bg-[#f4f4f4]"><SpinArrows /></div>
          <span className="pl-[4px]">4,233 mm</span>
        </div>
        <div className="flex h-[21px] items-center justify-end rounded-[2px] border border-[#ccc] bg-[#f0f0f0]">
          <div className="flex h-full w-[18px] items-center justify-center border-l border-[#ccc]"><Chevron /></div>
        </div>
      </Stack>
      <BarSep className="ml-[5px]" />
      <svg className="ml-[12px] shrink-0" width="16" height="13" viewBox="0 0 16 13" fill="none" stroke="#555">
        <rect x="1" y="1" width="9" height="9" strokeDasharray="2 1" />
        <rect x="0" y="0" width="3" height="3" fill="#f0f0f0" /><rect x="8.500" y="0" width="3" height="3" fill="#f0f0f0" />
        <rect x="0" y="8.500" width="3" height="3" fill="#f0f0f0" /><rect x="8.500" y="8.500" width="3" height="3" fill="#f0f0f0" />
        <path d="M14 12h2" />
      </svg>
      <Stack className="ml-[12px] w-[182px]">
        <div className="flex h-[21px] items-center rounded-[2px] border border-[#ccc] bg-white pl-[7px]">
          [Basic Graphics Frame]
          <div className="ml-auto flex h-full w-[19px] items-center justify-center border-l border-[#ccc] bg-[#f4f4f4]"><Chevron /></div>
        </div>
        <div className="flex h-[21px] items-center justify-end gap-[9px] pr-[4px]">
          <svg width="21" height="13" viewBox="0 0 21 13" fill="none" stroke="#999"><rect x=".5" y=".5" width="7" height="7" /><rect x="3.500" y="4.500" width="7" height="7" fill="#777" /><path d="M14 5h3a3 3 0 0 1 0 6h-3M14 5l2-2M14 5l2 2" /></svg>
          <svg width="17" height="13" viewBox="0 0 17 13" fill="none" stroke="#bbb"><rect x=".5" y="2.500" width="9" height="9" strokeDasharray="2 1" /><path d="M11 8l5-5M13 3h3v3" /></svg>
        </div>
      </Stack>
      <BarSep className="ml-[5px]" />
      <svg className="ml-auto shrink-0" width="10" height="16" viewBox="0 0 10 16">
        <path d="M5 0 0 9h3.500L2 16l7-10H5.500L8 0Z" fill="#555" />
      </svg>
      <BarSep className="ml-[11px]" />
      <div className="mr-[8px] ml-[8px] flex w-[12px] shrink-0 flex-col items-center gap-[15px]">
        <FaCog size={11} color="#555" />
        <div className="flex w-[12px] flex-col gap-[3px]">
          <i className="h-px bg-[#555]" />
          <i className="h-px bg-[#555]" />
          <i className="h-px bg-[#555]" />
        </div>
      </div>
    </div>
  )
}

export default function App() {
  return (
    <div className="flex h-[726px] w-[1912px] flex-col overflow-hidden whitespace-nowrap bg-[#f0f0f0] font-['Open_Sans','Noto_Sans',sans-serif]">
      <TitleBar />
      <ControlBar />
      <div className="flex min-h-0 flex-1">
        <Toolbar />
        <div className="flex min-w-0 flex-1 flex-col">
          <div className="flex h-[28px] shrink-0 bg-[#d9d9d9]">
            <div className="flex w-[354px] items-center bg-[#f0f0f0] pl-[15px] text-[11px] text-[#444]">
              <svg width="7" height="7" viewBox="0 0 7 7" stroke="#444"><path d="M.5.5l6 6M6.500.5l-6 6" /></svg>
              <span className="ml-[9px]">*PAC02_Melian_Hernandez_Toni.indd @ 162% [GPU Preview]</span>
            </div>
          </div>
          <div className="flex h-[16px] shrink-0">
            <div className="relative h-[16px] w-[15px] shrink-0 border-r border-b border-[#333] bg-[#f7f7f7]">
              <span className="absolute top-[7px] left-[2px] h-0 w-[11px] border-t border-dotted border-[#333]" />
              <span className="absolute top-[2px] left-[7px] h-[11px] w-0 border-l border-dotted border-[#333]" />
            </div>
            <TopRuler />
            <div className="flex-1 bg-[#fafafa]" />
          </div>
          <div className="flex min-h-0 flex-1">
            <SideRuler />
            <div className="relative w-[1802px] shrink-0 bg-[#c1c1c1]">
              <ButtonsAndForms />
              <LiquidLayout />
              <Timing />
              <Hyperlinks />
              <ObjectStates />
              <Media />
              <Animation />
            </div>
            <div className="flex-1 bg-[#fafafa] pt-[223px]">
              <div className="h-[43px] w-[14px] rounded-full bg-[#c4c4c4]" />
            </div>
          </div>
        </div>
        <RightDock />
      </div>
    </div>
  )
}
